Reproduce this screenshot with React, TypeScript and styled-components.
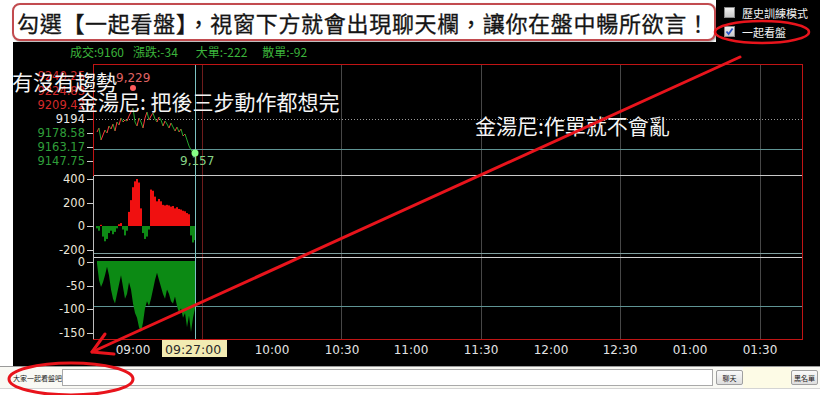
import React from 'react';
import styled, { createGlobalStyle } from 'styled-components';

const GlobalStyle = createGlobalStyle`
  html, body { margin: 0; padding: 0; background: #fff; }
  body { font-family: "Noto Sans CJK TC", "Noto Sans", sans-serif; }
`;

const Page = styled.div`
  position: relative;
  width: 820px;
  height: 395px;
  overflow: hidden;
  background: #fff;
  display: flex;
  flex-direction: column;
`;

const TopRow = styled.div`
  display: flex;
  height: 42px;
  flex-shrink: 0;
`;

const Callout = styled.div`
  position: relative;
  z-index: 2;
  box-sizing: border-box;
  width: 704px;
  height: 38px;
  margin: 3px 0 0 12px;
  border: 2px solid #c24b4f;
  border-radius: 8px;
  background: #fff;
  box-shadow: 1px 1px 2px rgba(0, 0, 0, 0.35);
  display: flex;
  align-items: center;
  padding-left: 3px;
  font-family: "Noto Sans CJK TC", sans-serif;
  font-size: 22px;
  letter-spacing: 0.7px;
  color: #151515;
  white-space: nowrap;
  -webkit-text-stroke: 0.3px #151515;
`;

const Options = styled.div`
  flex: 1;
  background: #000;
  display: flex;
  flex-direction: column;
  gap: 8px;
  padding: 7px 0 0 8px;
`;

const OptionRow = styled.label`
  display: flex;
  align-items: center;
  height: 11px;
  font-family: "Noto Sans CJK TC", sans-serif;
  font-size: 11px;
  color: #f2f2f2;
  white-space: nowrap;
`;

const Box = styled.span`
  box-sizing: border-box;
  width: 11px;
  height: 11px;
  margin-right: 7px;
  background: linear-gradient(#f0f0f0, #c8c8c8);
  border: 1px solid #8a8a8a;
  display: flex;
  align-items: center;
  justify-content: center;
`;

const ChartPanel = styled.div`
  position: relative;
  margin-left: 13px;
  width: 807px;
  height: 324px;
  background: #000;
  flex-shrink: 0;
`;

const Header = styled.div`
  height: 22px;
  display: flex;
  align-items: flex-start;
  padding-left: 57px;
  line-height: 20px;
  font-family: "Noto Sans CJK TC", sans-serif;
  font-size: 12px;
  color: #3cb43c;
  white-space: nowrap;
`;

const Stat = styled.span<{ $gap: number }>`
  margin-left: ${(p) => p.$gap}px;
`;

const ChartSvg = styled.svg`
  display: block;
`;

const ChatLine = styled.div<{ $left: number; $top: number }>`
  position: absolute;
  left: ${(p) => p.$left}px;
  top: ${(p) => p.$top}px;
  font-family: "Noto Sans CJK TC", sans-serif;
  font-size: 21px;
  line-height: 24px;
  color: #f4f4f4;
  white-space: nowrap;
  z-index: 5;
`;

const BottomBar = styled.div`
  box-sizing: border-box;
  height: 23px;
  border-top: 1px solid #9a9a9a;
  border-bottom: 1px solid #d4d4d4;
  background: #f9f9f4;
  display: flex;
  align-items: center;
  padding-left: 13px;
  flex-shrink: 0;
`;

const ChatLabel = styled.span`
  width: 49px;
  font-family: "Noto Sans CJK TC", sans-serif;
  font-size: 7px;
  color: #222;
  white-space: nowrap;
`;

const ChatInput = styled.input`
  box-sizing: border-box;
  width: 651px;
  height: 17px;
  margin: 0;
  padding: 0;
  border: 1px solid #a9a9a9;
  background: #fff;
`;

const SmallButton = styled.button<{ $ml: number; $mr: number }>`
  box-sizing: border-box;
  width: 27px;
  height: 15px;
  margin: 0 ${(p) => p.$mr}px 0 ${(p) => p.$ml}px;
  padding: 0;
  border: 1px solid #a0a0a0;
  border-radius: 2px;
  background: linear-gradient(#fafafa, #dedede);
  font-family: "Noto Sans CJK TC", sans-serif;
  font-size: 7px;
  color: #222;
  white-space: nowrap;
`;

const Spacer = styled.div`
  flex: 1;
  align-self: stretch;
  background: #fdfbe6;
`;

const Annotation = styled.svg`
  position: absolute;
  left: 0;
  top: 0;
  pointer-events: none;
  z-index: 10;
`;

const priceYs = [132,128,140,135,130,133,126,129,124,131,122,125,118,122,120,121,116,112,108,122,126,118,122,128,118,112,120,116,113,119,122,117,120,126,121,124,128,123,127,131,127,132,129,136,134,140,146,150,152,152];

const bigOrders = [-20,-40,10,-90,-130,-110,-60,-40,-70,-50,-20,15,25,-30,-80,-40,120,220,330,380,400,370,150,-60,-110,-90,-30,310,300,250,210,230,210,180,175,180,175,165,170,150,160,145,140,130,125,110,100,-80,-140,-120];

const smallDepth = [5,40,55,45,30,12,30,60,80,90,70,50,30,55,80,70,45,60,90,110,120,140,150,130,100,85,95,80,60,40,25,40,55,70,80,60,70,85,90,75,95,110,100,120,110,140,115,150,120,100];

const priceLabels: [string, number, string][] = [
  ['9240.25', 76, '#d42a2a'],
  ['9224.83', 91, '#d42a2a'],
  ['9209.42', 105, '#d42a2a'],
  ['9194', 119, '#e8e8e8'],
  ['9178.58', 133, '#2f9e3a'],
  ['9163.17', 147, '#2f9e3a'],
  ['9147.75', 161, '#2f9e3a'],
];

const volLabels: [string, number][] = [
  ['400', 179], ['200', 203], ['0', 226], ['-200', 250],
  ['0', 262], ['-50', 286], ['-100', 309], ['-150', 333],
];

const times: [string, number][] = [
  ['09:00', 133], ['10:00', 272], ['10:30', 342], ['11:00', 411],
  ['11:30', 481], ['12:00', 551], ['12:30', 620], ['01:00', 690], ['01:30', 760],
];

const Chart: React.FC = () => {
  const xs = priceYs.map((_, i) => 97 + i * 2);
  const smallPoly =
    `97,261 ` +
    smallDepth.map((d, i) => `${xs[i]},${(261 + d * 0.473).toFixed(1)}`).join(' ') +
    ` 195,261`;
  return (
    <ChartSvg width={807} height={302} viewBox="13 64 807 302" fontFamily="DejaVu Sans, sans-serif">
      <line x1={202.5} y1={64} x2={202.5} y2={340} stroke="#6e1c1c" strokeWidth={1} />
      {[341.5, 481.5, 620.5, 760.5].map((x) => (
        <line key={x} x1={x} y1={64} x2={x} y2={340} stroke="#474747" strokeWidth={1} />
      ))}
      <line x1={93} y1={119.5} x2={803} y2={119.5} stroke="#9a9a9a" strokeWidth={1} strokeDasharray="1 2" />
      <line x1={93} y1={149.5} x2={803} y2={149.5} stroke="#5f9494" strokeWidth={1} />
      <line x1={93} y1={175.5} x2={803} y2={175.5} stroke="#c8c8c8" strokeWidth={1.2} />
      <line x1={93} y1={253.5} x2={803} y2={253.5} stroke="#7f9e9e" strokeWidth={1} />
      <line x1={93} y1={257.5} x2={803} y2={257.5} stroke="#d2d2d2" strokeWidth={1.2} />
      <line x1={93} y1={306.5} x2={803} y2={306.5} stroke="#5f9494" strokeWidth={1} />

      {bigOrders.map((v, i) => {
        const h = Math.abs(v) * 0.1175;
        return (
          <rect
            key={i}
            x={xs[i] - 1}
            y={v > 0 ? 226 - h : 226}
            width={2}
            height={h}
            fill={v > 0 ? '#f01010' : '#0e8a16'}
          />
        );
      })}

      <polygon points={smallPoly} fill="#0c8a14" />

      {priceYs.slice(1).map((y, i) => (
        <line
          key={i}
          x1={xs[i]}
          y1={priceYs[i]}
          x2={xs[i + 1]}
          y2={y}
          stroke={y < priceYs[i] ? '#ff3a3a' : '#25a82e'}
          strokeWidth={1}
        />
      ))}

      <line x1={195.5} y1={64} x2={195.5} y2={340} stroke="#7cc2c2" strokeWidth={1} />

      <rect x={93.5} y={64.5} width={709} height={275} fill="none" stroke="#c01414" strokeWidth={1} />
      <line x1={93.5} y1={176} x2={93.5} y2={339} stroke="#bdbdbd" strokeWidth={1} />

      <circle cx={133} cy={88} r={3} fill="#ff5c5c" />
      <text x={116} y={82} fontSize={12} fill="#e06464">9,229</text>
      <circle cx={195} cy={153} r={3.5} fill="#86ff86" />
      <text x={180} y={165} fontSize={12} fill="#86d286">9,157</text>

      {priceLabels.map(([t, y, c]) => (
        <g key={t}>
          <text x={85} y={y + 4} fontSize={11.5} fill={c} textAnchor="end">{t}</text>
          <line x1={87} y1={y + 0.5} x2={93} y2={y + 0.5} stroke="#cfcfcf" strokeWidth={1} />
        </g>
      ))}
      {volLabels.map(([t, y], i) => (
        <g key={i}>
          <text x={85} y={y + 4} fontSize={11.5} fill="#ece6da" textAnchor="end">{t}</text>
          <line x1={87} y1={y + 0.5} x2={93} y2={y + 0.5} stroke="#cfcfcf" strokeWidth={1} />
        </g>
      ))}

      {times.map(([t, x]) => (
        <text key={t} x={x} y={354} fontSize={12} fill="#e4e4e4" textAnchor="middle">{t}</text>
      ))}
      <defs>
        <clipPath id="tclip">
          <rect x={162} y={340} width={65} height={17} />
        </clipPath>
      </defs>
      <rect x={162} y={340} width={65} height={17} fill="#f2ebb2" />
      <text x={165} y={354} fontSize={12.5} fill="#2a2a2a" clipPath="url(#tclip)">09:27:00</text>
    </ChartSvg>
  );
};

const Check: React.FC<{ checked?: boolean }> = ({ checked }) => (
  <Box>
    {checked && (
      <svg width="9" height="9" viewBox="0 0 9 9">
        <path d="M1.5 4.5 L3.6 7 L7.6 1.5" fill="none" stroke="#2a55c8" strokeWidth="1.8" />
      </svg>
    )}
  </Box>
);

export default function App() {
  return (
    <>
      <GlobalStyle />
      <Page lang="zh-Hant-TW">
        <TopRow>
          <Callout>勾選【一起看盤】，視窗下方就會出現聊天欄，讓你在盤中暢所欲言！</Callout>
          <Options>
            <OptionRow>
              <Check />
              歷史訓練模式
            </OptionRow>
            <OptionRow>
              <Check checked />
              一起看盤
            </OptionRow>
          </Options>
        </TopRow>
        <ChartPanel>
          <Header>
            <Stat $gap={0}>成交:9160</Stat>
            <Stat $gap={9}>漲跌:-34</Stat>
            <Stat $gap={18}>大單:-222</Stat>
            <Stat $gap={15}>散單:-92</Stat>
          </Header>
          <Chart />
        </ChartPanel>
        <BottomBar>
          <ChatLabel>大家一起看盤吧</ChatLabel>
          <ChatInput type="text" />
          <SmallButton $ml={3} $mr={0}>聊天</SmallButton>
          <Spacer />
          <SmallButton $ml={0} $mr={2}>黑名單</SmallButton>
        </BottomBar>

        <ChatLine $left={12} $top={69}>有沒有趨勢</ChatLine>
        <ChatLine $left={77} $top={89}>金湯尼: 把後三步動作都想完</ChatLine>
        <ChatLine $left={475} $top={113}>金湯尼:作單就不會亂</ChatLine>

        <Annotation width={820} height={395} viewBox="0 0 820 395">
          <g fill="none" stroke="#e8141c" strokeLinecap="round">
            <line x1={740} y1={57} x2={92} y2={352} strokeWidth={3} />
            <polyline points="114,354 92,352 105,334" strokeWidth={3} strokeLinejoin="round" />
            <ellipse cx={762} cy={32} rx={47} ry={11} strokeWidth={2.5} />
            <ellipse cx={71} cy={379} rx={62} ry={16} strokeWidth={3} />
          </g>
        </Annotation>
      </Page>
    </>
  );
}
